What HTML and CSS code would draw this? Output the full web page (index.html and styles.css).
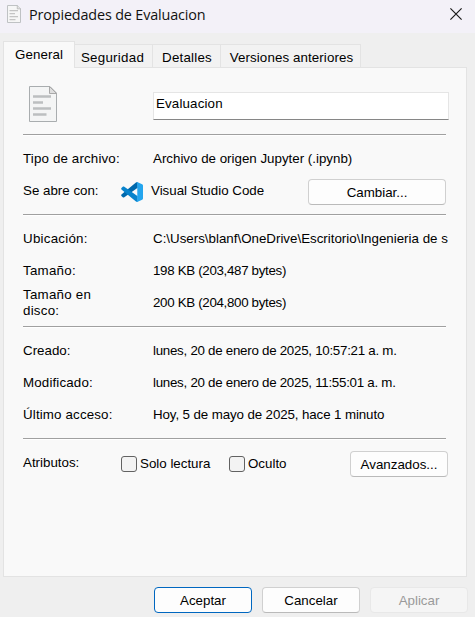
FILE: index.html
```html
<!DOCTYPE html>
<html lang="es">
<head>
<meta charset="utf-8">
<title>Propiedades de Evaluacion</title>
<link rel="stylesheet" href="styles.css">
</head>
<body>
<div class="dialog">
  <header class="titlebar">
    <svg class="title-icon" viewBox="0 0 28 36" preserveAspectRatio="none"><path d="M1 1h20l6 6.300v27.700H1z" fill="#f6f6f6" stroke="#bfc2c4" stroke-width="2"/><path d="M20.500.7v7h7" fill="#e2e2e2" stroke="#b0b0b0" stroke-width="1.400"/><path d="M5 11h17M5 17h11M5 23h17M5 29h12" stroke="#c4c4c4" stroke-width="2.500"/></svg>
    <h1 class="title">Propiedades de Evaluacion</h1>
    <svg class="close" viewBox="0 0 12 12"><path d="M.4.4l11.200 11.200M11.600.4L.4 11.600" stroke="#1a1a1a" stroke-width="1.150"/></svg>
  </header>
  <nav class="tabs">
    <span class="tab tab-general active">General</span>
    <span class="tab tab-security">Seguridad</span>
    <span class="tab tab-details">Detalles</span>
    <span class="tab tab-versions">Versiones anteriores</span>
  </nav>
  <main class="panel">
    <div class="file-head">
      <svg class="file-icon" viewBox="0 0 28 36"><path d="M.5.5h20.500l6.500 6.500v28.500H.5z" fill="#f4f5f5" stroke="#a9adaf"/><path d="M20.500.5v7h7z" fill="#dedede" stroke="#a9a9a9"/><path d="M4 10.500h18M4 16.500h10M4 22.500h18M4 28.500h13.500" stroke="#bcbfc0" stroke-width="2.400"/></svg>
      <div class="name-field">Evaluacion</div>
    </div>
    <section class="group">
      <div class="row"><span class="label type">Tipo de archivo:</span><span class="value">Archivo de origen Jupyter (.ipynb)</span></div>
      <div class="row opens">
        <span class="label">Se abre con:</span>
        <svg class="vscode" viewBox="0 0 100 100" preserveAspectRatio="none"><path d="M76 29L15 76c-3 2-5 2-7 0l-6-6c-2-2-2-5 0-7L68 3c2-2 5-2.500 8-1.500z" fill="#0069ad"/><path d="M76 71L15 24c-3-2-5-2-7 0l-6 6c-2 2-2 5 0 7l66 60c2 2 5 2.500 8 1.500z" fill="#0883cc"/><path d="M69 98c2 2 5 2 7 1l20-10c2-1 4-3 4-6V17c0-3-2-5-4-6L76 1c-2-1-5-1-7 1 2-1 5 1 5 4v88c0 3-3 5-5 4z" fill="#24a5ee"/></svg>
        <span class="app">Visual Studio Code</span>
        <button class="btn change">Cambiar...</button>
      </div>
    </section>
    <section class="group">
      <div class="row"><span class="label wide">Ubicación:</span><span class="value path">C:\Users\blanf\OneDrive\Escritorio\Ingenieria de s</span></div>
      <div class="row"><span class="label wide">Tamaño:</span><span class="value size">198 KB (203,487 bytes)</span></div>
      <div class="row"><span class="label wide wrap">Tamaño en disco:</span><span class="value size">200 KB (204,800 bytes)</span></div>
    </section>
    <section class="group">
      <div class="row"><span class="label">Creado:</span><span class="value date">lunes, 20 de enero de 2025, 10:57:21 a. m.</span></div>
      <div class="row"><span class="label type">Modificado:</span><span class="value date">lunes, 20 de enero de 2025, 11:55:01 a. m.</span></div>
      <div class="row"><span class="label type">Último acceso:</span><span class="value recent">Hoy, 5 de mayo de 2025, hace 1 minuto</span></div>
    </section>
    <section class="group attributes">
      <div class="row">
        <span class="label">Atributos:</span>
        <span class="check read-only"><i class="box"></i>Solo lectura</span>
        <span class="check"><i class="box"></i>Oculto</span>
        <button class="btn advanced">Avanzados...</button>
      </div>
    </section>
  </main>
  <footer class="actions">
    <button class="btn primary">Aceptar</button>
    <button class="btn">Cancelar</button>
    <button class="btn" disabled>Aplicar</button>
  </footer>
</div>
</body>
</html>
```
FILE: styles.css
```css
* { box-sizing: border-box; }
body {
  margin: 0;
  background: #efefef;
  color: #000;
  font: 13.33px/16px "Liberation Sans", Arial, sans-serif;
}
.dialog { width: 475px; height: 617px; overflow: hidden; display: flex; flex-direction: column; }
.titlebar {
  height: 33px;
  flex: none;
  display: flex;
  align-items: center;
  padding: 0 13px 4px 7px;
  background: #f3f1f8;
}
.title-icon { width: 14px; height: 18px; margin-top: -1px; }
.title {
  margin: 0 auto 0 8px;
  font: 14.4px/20px "Open Sans", "Noto Sans", sans-serif;
  letter-spacing: -0.15px;
  color: #111;
}
.close { width: 12px; height: 12px; margin-top: -1px; }
.tabs { display: flex; align-items: flex-end; height: 34px; flex: none; padding-left: 3px; }
.tab {
  height: 23px;
  padding-top: 5px;
  text-align: center;
  letter-spacing: 0.1px;
  white-space: nowrap;
  background: #f2f2f2;
  border: 1px solid #e3e3e3;
  border-width: 1px 1px 0 0;
}
.tab.active {
  height: 27px;
  margin-bottom: -1px;
  border-left-width: 1px;
  background: #f9f9f9;
  position: relative;
}
.tab-general { width: 72px; }
.tab-security { width: 78px; padding-right: 2px; letter-spacing: 0.27px; }
.tab-details { width: 68px; padding-left: 1px; letter-spacing: 0.22px; }
.tab-versions { width: 140px; padding-left: 2px; }
.panel {
  width: 464px;
  height: 510px;
  flex: none;
  margin-left: 3px;
  padding: 0 17px 0 19px;
  background: #f9f9f9;
  border: 1px solid #e3e3e3;
}
.file-head { display: flex; height: 66px; padding-top: 18px; }
.file-icon { width: 28px; height: 36px; margin-left: 6px; }
.name-field {
  width: 296px;
  height: 28px;
  margin: 6px 0 0 96px;
  padding: 3px 2px;
  letter-spacing: 0.15px;
  background: #fff;
  border: 1px solid #e5e5e5;
  border-bottom-color: #868686;
}
.group { width: 423px; border-top: 1px solid #a0a0a0; padding: 7px 0 8px; box-shadow: inset 0 1px #fff; }
.row { display: flex; align-items: center; height: 32px; }
.label { width: 98px; flex: none; padding-top: 2px; white-space: nowrap; }
.wide { letter-spacing: 0.25px; }
.type { letter-spacing: 0.15px; }
.wrap { padding-right: 16px; white-space: normal; }
.value { margin-left: 32px; padding-top: 2px; white-space: nowrap; }
.path { width: 296px; flex: none; overflow: hidden; }
.size { letter-spacing: -0.32px; }
.date { letter-spacing: -0.27px; }
.recent { letter-spacing: -0.11px; }
.vscode { width: 22px; height: 20px; margin-top: 4px; }
.app { margin-left: 8px; padding-top: 2px; }
.btn {
  width: 98px;
  height: 26px;
  padding: 2px 0 0;
  font: inherit;
  color: #000;
  background: #fdfdfd;
  border: 1px solid #d0d0d0;
  border-bottom-color: #bababa;
  border-radius: 4px;
}
.change { width: 138px; margin: 4px 0 0 auto; }
.check { display: flex; align-items: center; gap: 3px; margin-top: 4px; }
.read-only { width: 108px; }
.box { width: 16px; height: 16px; border: 1px solid #626262; border-radius: 3px; background: #f3f3f3; }
.advanced { margin: 4px -2px 0 auto; }
.actions { display: flex; justify-content: flex-end; gap: 10px; padding: 10px 7px 0 0; }
.primary { border-color: #0067c0; }
.btn:disabled { color: #9a9a9a; background: #f5f5f5; border-color: #e8e8e8; }
```
